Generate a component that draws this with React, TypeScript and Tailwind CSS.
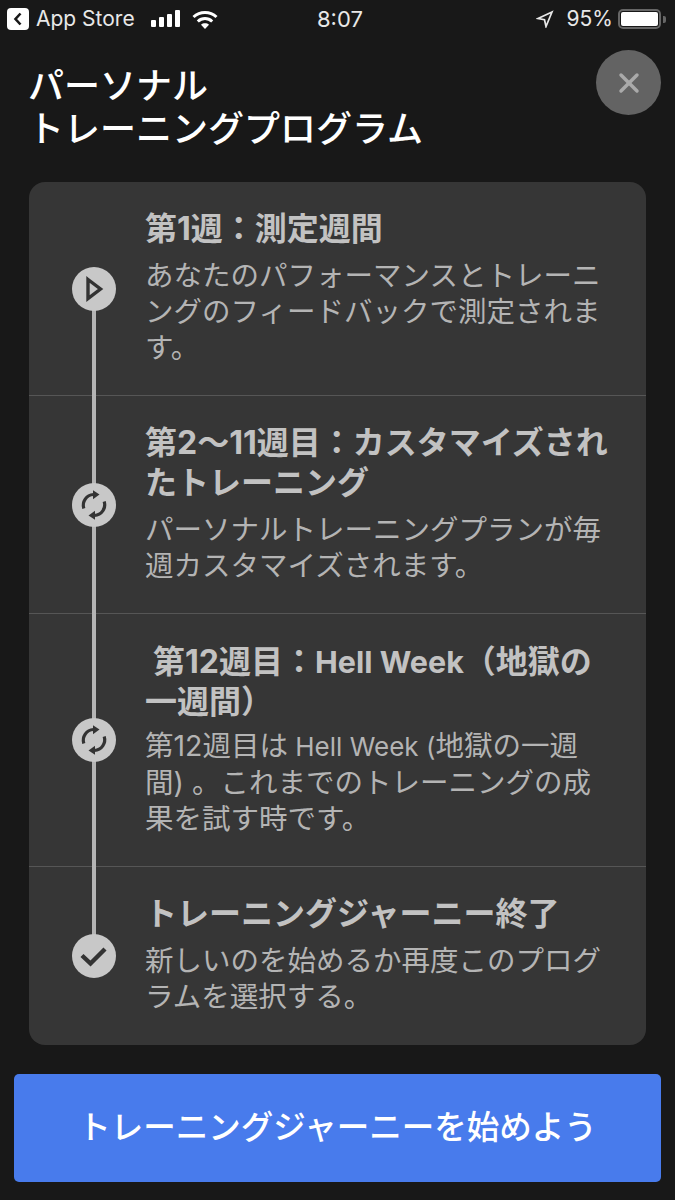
import { X } from "lucide-react"
import type { ReactNode } from "react"

const jp = "font-['Inter','Noto_Sans_CJK_JP',sans-serif]"

function PlayIcon() {
  return (
    <svg className="ml-[2px]" width="18" height="26" viewBox="0 0 18 26" fill="none" stroke="#333333" strokeWidth="3.4">
      <path d="M2 3.500 14.500 13 2 22.500z" />
    </svg>
  )
}

function RefreshIcon() {
  return (
    <svg width="32" height="32" viewBox="0 0 32 32" fill="none" stroke="#333333" strokeWidth="3.2">
      <path d="M5.800 19.500A10.800 10.800 0 0 1 15.500 5.500" />
      <path d="M15 1.200 21.500 5.500 15 10.200z" fill="#333333" stroke="none" />
      <path d="M26.200 12.500A10.800 10.800 0 0 1 16.500 26.500" />
      <path d="M17 30.800 10.500 26.500 17 21.800z" fill="#333333" stroke="none" />
    </svg>
  )
}

function CheckIcon() {
  return (
    <svg width="28" height="28" viewBox="0 0 28 28" fill="none" stroke="#333333" strokeWidth="4.400">
      <path d="M2 13.500 10.500 21.500 25 7" />
    </svg>
  )
}

function Step({
  icon,
  title,
  body,
  bodyGap = "mt-[9px]",
  last,
  textPad = "pt-[27px] pb-[29px]",
}: {
  icon: ReactNode
  title: ReactNode
  body: ReactNode
  bodyGap?: string
  last?: boolean
  textPad?: string
}) {
  return (
    <div className={`flex items-center pl-[43px] ${last ? "" : "border-b border-[#565656]"}`}>
      <div className="relative z-10 flex h-[44px] w-[44px] shrink-0 items-center justify-center rounded-full bg-[#c8c8c8]">
        {icon}
      </div>
      <div className={`ml-[29px] min-w-0 flex-1 whitespace-nowrap ${textPad}`}>
        <div className="text-[32px] leading-[40px] font-bold text-[#c2c2c2]">{title}</div>
        <div className={`${bodyGap} text-[28.5px] leading-[36px] text-[#b4b4b4]`}>{body}</div>
      </div>
    </div>
  )
}

function StatusBar() {
  return (
    <div className="relative flex h-[38px] items-center pl-[7px] pr-[9px] text-[21px] text-[#e8e8e8]">
      <div className="flex h-[22px] w-[22px] items-center justify-center rounded-[4px] bg-white">
        <svg width="10" height="14" viewBox="0 0 10 14" fill="none">
          <path d="M7.500 1.500 2.500 7l5 5.500" stroke="#181818" strokeWidth="2.600" />
        </svg>
      </div>
      <span className="ml-[7px]">App Store</span>
      <div className="ml-[16px] flex items-end gap-[3px] self-end pb-[11px]">
        <span className="h-[7px] w-[5px] rounded-[1px] bg-white" />
        <span className="h-[10px] w-[5px] rounded-[1px] bg-white" />
        <span className="h-[13px] w-[5px] rounded-[1px] bg-white" />
        <span className="h-[17px] w-[5px] rounded-[1px] bg-white" />
      </div>
      <svg className="ml-[12px]" width="26" height="19" viewBox="0 0 26 19" fill="none" stroke="#fff" strokeWidth="3">
        <path d="M1.500 7c6.500-6 16.500-6 23 0" />
        <path d="M5.800 11.500c4.200-3.900 10.200-3.900 14.400 0" />
        <path d="M13 19 9 14.700c2.200-1.900 5.800-1.900 8 0z" fill="#fff" stroke="none" />
      </svg>
      <span className="absolute left-[317px] top-[6px] text-[22px] leading-[26px]">8:07</span>
      <svg className="ml-auto" width="18" height="18" viewBox="0 0 18 18" fill="none" stroke="#e8e8e8" strokeWidth="1.700">
        <path d="M16 2 2 8.500l6.500 1.200L10 16.500z" />
      </svg>
      <span className="ml-[13px]">95%</span>
      <div className="ml-[5px] h-[20px] w-[43px] rounded-[5px] border-2 border-[#666666] p-[1px]">
        <div className="h-full w-full rounded-[2px] bg-white" />
      </div>
      <span className="ml-[2px] h-[7px] w-[3px] rounded-r-[2px] bg-[#666666]" />
    </div>
  )
}

export default function App() {
  return (
    <div className={`flex h-[1200px] w-[675px] flex-col overflow-hidden bg-[#181818] ${jp}`}>
      <StatusBar />

      <div className="flex items-start justify-between pl-[28px] pr-[14px] pt-[12px]">
        <h1 className="pt-[15px] text-[36px] leading-[43px] font-medium text-white">
          パーソナル
          <br />
          トレーニングプログラム
        </h1>
        <button className="flex h-[65px] w-[65px] items-center justify-center rounded-full bg-[#636363] text-[#aaaaaa]">
          <X size={32} strokeWidth={2.6} />
        </button>
      </div>

      <div className="relative mx-[29px] mt-[31px] rounded-[16px] bg-[#363636]">
        <div className="absolute left-[63px] top-[108px] h-[666px] w-[4px] bg-[#b4b4b4]" />
        <Step
          icon={<PlayIcon />}
          title={<>第1週：測定週間</>}
          body={
            <>
              あなたのパフォーマンスとトレーニ
              <br />
              ングのフィードバックで測定されま
              <br />
              す。
            </>
          }
        />
        <Step
          icon={<RefreshIcon />}
          title={
            <>
              第2〜11週目：カスタマイズされ
              <br />
              たトレーニング
            </>
          }
          body={
            <>
              パーソナルトレーニングプランが毎
              <br />
              週カスタマイズされます。
            </>
          }
        />
        <Step
          icon={<RefreshIcon />}
          textPad="pt-[28px] pb-[29px]"
          bodyGap="mt-[6px]"
          title={
            <>
              <span className="pl-[8px]">
                第12週目：<span className="text-[30.5px]">Hell Week</span>（地獄の
              </span>
              <br />
              一週間）
            </>
          }
          body={
            <>
              第12週目は<span className="text-[26px]"> Hell Week (</span>地獄の一週
              <br />
              間) 。これまでのトレーニングの成
              <br />
              果を試す時です。
            </>
          }
        />
        <Step
          last
          icon={<CheckIcon />}
          textPad="pt-[27px] pb-[30px]"
          title={<>トレーニングジャーニー終了</>}
          body={
            <>
              新しいのを始めるか再度このプログ
              <br />
              ラムを選択する。
            </>
          }
        />
      </div>

      <button className="mx-[14px] mt-[29px] flex h-[108px] shrink-0 items-center justify-center rounded-[5px] bg-[#487bec] text-[32.5px] font-medium text-white">
        トレーニングジャーニーを始めよう
      </button>
    </div>
  )
}
